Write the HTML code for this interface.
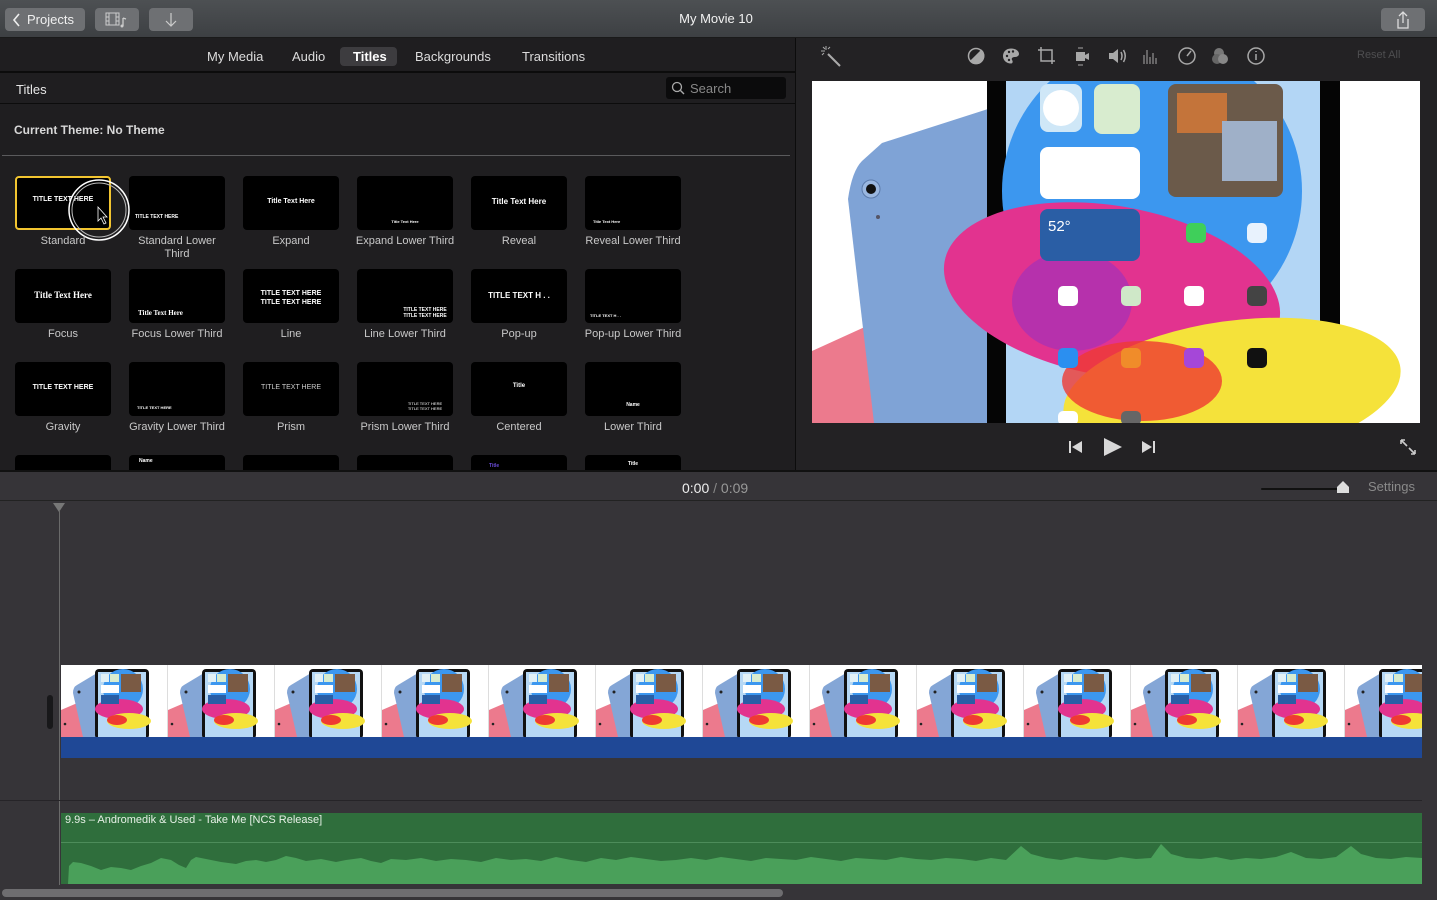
<!DOCTYPE html>
<html><head><meta charset="utf-8">
<style>
*{box-sizing:border-box;margin:0;padding:0}
body{width:1437px;height:900px;overflow:hidden;background:#363438;font-family:"Liberation Sans",sans-serif;position:relative;color:#ddd}
.abs{position:absolute}
.tb{left:0;top:0;width:1437px;height:38px;background:linear-gradient(#4d5053,#3d4043);border-bottom:1px solid #1a1a1a}
.btn{position:absolute;top:8px;height:23px;background:#6e7073;border-radius:4px;color:#f0f0f0;font-size:13px}
.lp{left:0;top:38px;width:795px;height:432px;background:#1f1e20}
.rp{left:796px;top:38px;width:641px;height:432px;background:#232224}
.tab{position:absolute;top:48px;height:18px;font-size:13px;color:#dcdcdc;line-height:18px}
.th{position:absolute;width:96px;height:54px;background:#000;border-radius:4px;color:#fff;font-weight:bold;text-align:center;overflow:hidden}
.lb{position:absolute;width:120px;text-align:center;font-size:11px;color:#c8c8c8;line-height:13px}
.ic{position:absolute;top:46px}
</style></head><body>
<div class="abs tb"></div>
<div class="btn" style="left:5px;width:80px;padding-left:22px;line-height:23px">Projects</div>
<svg class="abs" style="left:12px;top:13px" width="10" height="14"><path d="M7 1 L2 7 L7 13" stroke="#eee" stroke-width="1.6" fill="none"/></svg>
<div class="btn" style="left:95px;width:44px"></div>
<svg class="abs" style="left:105px;top:12px" width="26" height="16"><rect x="1" y="1" width="13" height="12" fill="none" stroke="#ccc"/><path d="M4 1V13M11 1V13M1 5H4M1 9H4M11 5H14M11 9H14" stroke="#ccc"/><path d="M18 6V14M18 6L21 7" stroke="#ccc" stroke-width="1.3"/><circle cx="17" cy="14" r="1.5" fill="#ccc"/></svg>
<div class="btn" style="left:149px;width:44px"></div>
<svg class="abs" style="left:164px;top:12px" width="14" height="16"><path d="M7 1V14M2 9L7 14L12 9" stroke="#ccc" fill="none" stroke-width="1.2"/></svg>
<div class="abs" style="left:0;width:1432px;top:11px;text-align:center;font-size:13px;color:#f2f2f2">My Movie 10</div>
<div class="btn" style="left:1381px;width:44px"></div>
<svg class="abs" style="left:1395px;top:10px" width="16" height="20"><path d="M8 2V13M4 6L8 2L12 6M3 9V18H13V9" stroke="#ddd" fill="none" stroke-width="1.3"/></svg>

<div class="abs lp"></div>
<div class="abs" style="left:0;top:71px;width:795px;height:2px;background:#0c0c0c"></div>
<div class="abs" style="left:340px;top:47px;width:57px;height:19px;background:#3d3c3f;border-radius:4px"></div>
<div class="tab" style="left:207px">My Media</div>
<div class="tab" style="left:292px">Audio</div>
<div class="tab" style="left:353px;color:#fff;font-weight:bold">Titles</div>
<div class="tab" style="left:415px">Backgrounds</div>
<div class="tab" style="left:522px">Transitions</div>
<div class="abs" style="left:16px;top:82px;font-size:13px;color:#e6e6e6">Titles</div>
<div class="abs" style="left:666px;top:77px;width:120px;height:22px;background:#0b0b0c;border-radius:3px"></div>
<svg class="abs" style="left:671px;top:81px" width="14" height="14"><circle cx="6" cy="6" r="4.5" stroke="#aaa" fill="none" stroke-width="1.3"/><path d="M9.5 9.5L13 13" stroke="#aaa" stroke-width="1.4"/></svg>
<div class="abs" style="left:690px;top:81px;font-size:13px;color:#888">Search</div>
<div class="abs" style="left:0;top:103px;width:795px;height:1px;background:#0c0c0c"></div>
<div class="abs" style="left:14px;top:123px;font-size:12px;font-weight:bold;color:#d8d8d8">Current Theme: No Theme</div>
<div class="abs" style="left:2px;top:155px;width:788px;height:1px;background:#5a5a5c"></div>

<!-- row 1 -->
<div class="th" style="left:15px;top:176px;border:2px solid #f2c530;font-size:7px;padding-top:18px">TITLE TEXT HERE</div>
<div class="th" style="left:129px;top:176px;font-size:5px;text-align:left;padding:38px 0 0 6px">TITLE TEXT HERE</div>
<div class="th" style="left:243px;top:176px;font-size:7px;padding-top:22px">Title Text Here</div>
<div class="th" style="left:357px;top:176px;font-size:4px;padding-top:43px">Title Text Here</div>
<div class="th" style="left:471px;top:176px;font-size:8px;padding-top:21px">Title Text Here</div>
<div class="th" style="left:585px;top:176px;font-size:4px;text-align:left;padding:43px 0 0 8px">Title Text Here</div>
<svg class="abs" style="left:66px;top:178px" width="66" height="66"><circle cx="33" cy="32" r="30" fill="none" stroke="#fff" stroke-width="1.5"/><circle cx="33" cy="32" r="27" fill="none" stroke="#bbb" stroke-width="1"/><path d="M32 29V43L35 40L38 46L40 45L37 39H41Z" fill="#000" stroke="#fff" stroke-width="0.8"/></svg>
<div class="lb" style="left:3px;top:235px">Standard</div>
<div class="lb" style="left:117px;top:235px">Standard Lower<br>Third</div>
<div class="lb" style="left:231px;top:235px">Expand</div>
<div class="lb" style="left:345px;top:235px">Expand Lower Third</div>
<div class="lb" style="left:459px;top:235px">Reveal</div>
<div class="lb" style="left:573px;top:235px">Reveal Lower Third</div>
<!-- row 2 -->
<div class="th" style="left:15px;top:269px;font-family:'Liberation Serif',serif;font-size:9px;padding-top:21px">Title Text Here</div>
<div class="th" style="left:129px;top:269px;font-family:'Liberation Serif',serif;font-size:7px;text-align:left;padding:40px 0 0 9px">Title Text Here</div>
<div class="th" style="left:243px;top:269px;font-size:7px;padding-top:20px;line-height:9px">TITLE TEXT HERE<br>TITLE TEXT HERE</div>
<div class="th" style="left:357px;top:269px;font-size:5px;padding:38px 0 0 40px;line-height:6px">TITLE TEXT HERE<br>TITLE TEXT HERE</div>
<div class="th" style="left:471px;top:269px;font-size:8px;padding-top:22px">TITLE TEXT H . .</div>
<div class="th" style="left:585px;top:269px;font-size:4px;text-align:left;padding:44px 0 0 5px">TITLE TEXT H . .</div>
<div class="lb" style="left:3px;top:328px">Focus</div>
<div class="lb" style="left:117px;top:328px">Focus Lower Third</div>
<div class="lb" style="left:231px;top:328px">Line</div>
<div class="lb" style="left:345px;top:328px">Line Lower Third</div>
<div class="lb" style="left:459px;top:328px">Pop-up</div>
<div class="lb" style="left:573px;top:328px">Pop-up Lower Third</div>
<!-- row 3 -->
<div class="th" style="left:15px;top:362px;font-size:7px;padding-top:22px">TITLE TEXT HERE</div>
<div class="th" style="left:129px;top:362px;font-size:4px;text-align:left;padding:43px 0 0 8px">TITLE TEXT HERE</div>
<div class="th" style="left:243px;top:362px;font-size:7px;padding-top:22px;font-weight:normal;color:#ccc">TITLE TEXT HERE</div>
<div class="th" style="left:357px;top:362px;font-size:4px;padding:39px 0 0 40px;font-weight:normal">TITLE TEXT HERE<br>TITLE TEXT HERE</div>
<div class="th" style="left:471px;top:362px;font-size:6px;padding-top:21px">Title</div>
<div class="th" style="left:585px;top:362px;font-size:5px;padding-top:40px">Name</div>
<div class="lb" style="left:3px;top:421px">Gravity</div>
<div class="lb" style="left:117px;top:421px">Gravity Lower Third</div>
<div class="lb" style="left:231px;top:421px">Prism</div>
<div class="lb" style="left:345px;top:421px">Prism Lower Third</div>
<div class="lb" style="left:459px;top:421px">Centered</div>
<div class="lb" style="left:573px;top:421px">Lower Third</div>
<!-- row 4 partial -->
<div class="th" style="left:15px;top:455px;height:15px;border-radius:4px 4px 0 0"></div>
<div class="th" style="left:129px;top:455px;height:15px;font-size:5px;text-align:left;padding:3px 0 0 10px;border-radius:4px 4px 0 0">Name</div>
<div class="th" style="left:243px;top:455px;height:15px;border-radius:4px 4px 0 0"></div>
<div class="th" style="left:357px;top:455px;height:15px;border-radius:4px 4px 0 0"></div>
<div class="th" style="left:471px;top:455px;height:15px;font-size:5px;color:#6a4bd8;padding-top:8px;text-align:left;padding-left:18px;border-radius:4px 4px 0 0">Title</div>
<div class="th" style="left:585px;top:455px;height:15px;font-size:5px;padding-top:6px;border-radius:4px 4px 0 0">Title</div>

<div class="abs" style="left:795px;top:38px;width:1px;height:432px;background:#0c0c0c"></div>
<div class="abs rp"></div>
<!-- viewer toolbar icons -->
<svg class="abs" style="left:818px;top:44px" width="26" height="24"><path d="M10 10L22 22" stroke="#aaa" stroke-width="2"/><path d="M8 2V6M3 7H7M5 3L7 5M12 3L10 5M4 11L6 9" stroke="#aaa" stroke-width="1"/></svg>
<svg class="abs" style="left:965px;top:44px" width="310" height="24" fill="none" stroke="#a8a8a8" stroke-width="1.5">
<circle cx="11" cy="12" r="7.5"/><path d="M16.5 6.5A7.5 7.5 0 0 1 5.7 17.3Z" fill="#a8a8a8"/>
<path d="M46 4.5C40 4.5 38 9 38 12C38 16 41 19.5 46 19.5C48 19.5 48 17 47 16C46 14 48 13 50 13C53 13 54 11 54 10C54 7 51 4.5 46 4.5Z" fill="#a8a8a8" stroke="none"/><circle cx="42" cy="12" r="1.2" fill="#232224" stroke="none"/><circle cx="44" cy="8" r="1.2" fill="#232224" stroke="none"/><circle cx="48" cy="7.5" r="1.2" fill="#232224" stroke="none"/><circle cx="44" cy="16" r="1.2" fill="#232224" stroke="none"/>
<path d="M76 3V17H90M73 6H87V20"/>
<rect x="111" y="8" width="9" height="9" fill="#a8a8a8" stroke="none"/><path d="M120 11L124 9V16L120 14Z" fill="#a8a8a8" stroke="none"/><path d="M113 4H118M113 21H118" stroke-width="1"/>
<path d="M144 9H148L153 5V19L148 15H144Z" fill="#a8a8a8" stroke="none"/><path d="M156 8Q158 12 156 16M158.5 6Q162 12 158.5 18"/>
<path d="M179 20V11M182 20V6M185 20V13M188 20V9M191 20V14" stroke-width="1"/>
<circle cx="222" cy="12" r="8"/><path d="M222 12L226 7"/>
<circle cx="254" cy="9" r="5" fill="#777" stroke="none"/><circle cx="252" cy="15" r="5" fill="#666" stroke="none"/><circle cx="258" cy="15" r="5" fill="#888" stroke="none"/>
<circle cx="291" cy="12" r="8"/><path d="M291 10V16M291 7V8"/>
</svg>
<div class="abs" style="left:1357px;top:49px;font-size:11px;color:#4e4e50">Reset All</div>

<!-- video -->
<svg class="abs" style="left:812px;top:81px" width="608" height="342">
<rect width="608" height="342" fill="#fff"/>
<path d="M0 270L176 190V342H0Z" fill="#ec7a8d"/>
<path d="M50 80Q40 90 36 118L62 342H176V28L70 62Z" fill="#7fa3d6"/>
<circle cx="59" cy="108" r="9" fill="#9ab7e0" stroke="#5b7aaa"/><circle cx="59" cy="108" r="5" fill="#111"/><circle cx="66" cy="136" r="2" fill="#556"/>
<rect x="175" y="0" width="353" height="342" fill="#050505"/>
<rect x="194" y="0" width="314" height="342" fill="#b3d6f5"/>
<circle cx="340" cy="110" r="150" fill="#3c97ef"/>
<ellipse cx="300" cy="210" rx="170" ry="85" fill="#e2338f" transform="rotate(10 300 210)"/>
<ellipse cx="260" cy="220" rx="60" ry="50" fill="#9a31c0" opacity=".6"/>
<ellipse cx="420" cy="310" rx="170" ry="70" fill="#f5e23a" transform="rotate(-8 420 310)"/>
<ellipse cx="330" cy="300" rx="80" ry="40" fill="#ef3a32" opacity=".8"/>
<rect x="228" y="3" width="42" height="48" rx="8" fill="#cfe7f7"/><circle cx="249" cy="27" r="18" fill="#fff"/>
<rect x="282" y="3" width="46" height="50" rx="8" fill="#d8eccf"/>
<rect x="356" y="3" width="115" height="113" rx="8" fill="#6b5a4a"/><rect x="365" y="12" width="50" height="40" fill="#c4743a"/><rect x="410" y="40" width="55" height="60" fill="#9fb0c8"/>
<rect x="228" y="66" width="100" height="52" rx="8" fill="#fff"/>
<rect x="228" y="128" width="100" height="52" rx="8" fill="#2a5ea5"/>
<text x="236" y="150" font-size="15" fill="#fff" font-family="Liberation Sans">52°</text>
<rect x="374" y="142" width="20" height="20" rx="5" fill="#3fcf5a"/><rect x="435" y="142" width="20" height="20" rx="5" fill="#e8f2fd"/>
<rect x="246" y="205" width="20" height="20" rx="5" fill="#fff"/><rect x="309" y="205" width="20" height="20" rx="5" fill="#cfe8c8"/><rect x="372" y="205" width="20" height="20" rx="5" fill="#fff"/><rect x="435" y="205" width="20" height="20" rx="5" fill="#444"/>
<rect x="246" y="267" width="20" height="20" rx="5" fill="#2b8ff0"/><rect x="309" y="267" width="20" height="20" rx="5" fill="#f08c2a"/><rect x="372" y="267" width="20" height="20" rx="5" fill="#a547d8"/><rect x="435" y="267" width="20" height="20" rx="5" fill="#111"/>
<rect x="246" y="330" width="20" height="14" rx="5" fill="#fff"/><rect x="309" y="330" width="20" height="14" rx="5" fill="#666"/>
</svg>
<svg class="abs" style="left:1068px;top:436px" width="95" height="22" fill="#d8d8d8"><rect x="1" y="5" width="2" height="12"/><path d="M14 5V17L4 11Z"/><path d="M36 2V20L54 11Z"/><path d="M74 5V17L84 11Z"/><rect x="85" y="5" width="2" height="12"/></svg>
<svg class="abs" style="left:1398px;top:437px" width="20" height="20" stroke="#ccc" stroke-width="1.6" fill="none"><path d="M3 3L9 9M3 3H7M3 3V7M17 17L11 11M17 17H13M17 17V13"/></svg>

<!-- timeline -->
<div class="abs" style="left:0;top:470px;width:1437px;height:2px;background:#111"></div>
<div class="abs" style="left:0;top:472px;width:1437px;height:29px;background:#363438;border-bottom:1px solid #222"></div>
<div class="abs" style="left:682px;top:480px;font-size:14px;color:#eee">0:00 <span style="color:#888">/</span> <span style="color:#999">0:09</span></div>
<div class="abs" style="left:1261px;top:488px;width:80px;height:2px;background:#111;border-radius:1px"></div>
<svg class="abs" style="left:1336px;top:480px" width="15" height="14"><path d="M1 13V7L7 1L13 7V13Z" fill="#ddd"/></svg>
<div class="abs" style="left:1368px;top:479px;font-size:13px;color:#8a8a8a">Settings</div>
<svg class="abs" style="left:53px;top:503px" width="13" height="10"><path d="M0 0H12L6 9Z" fill="#777"/></svg>
<div class="abs" style="left:59px;top:510px;width:1px;height:375px;background:#6a6a6a"></div>
<div class="abs" style="left:47px;top:695px;width:6px;height:34px;background:#18181a;border-radius:3px"></div>

<svg class="abs" style="left:61px;top:665px" width="1361" height="94">
<defs><pattern id="fr" x="0" y="0" width="107" height="72" patternUnits="userSpaceOnUse">
<rect width="107" height="72" fill="#fff"/><rect x="106" width="1" height="72" fill="#ddd"/>
<path d="M0 45L35 30V72H0Z" fill="#ec7a8d"/>
<path d="M16 20Q12 22 12 28L22 72H36V8Z" fill="#84a6d6"/><circle cx="18" cy="27" r="1.5" fill="#222"/><circle cx="4" cy="59" r="1.3" fill="#222"/>
<rect x="34" y="4" width="54" height="70" rx="4" fill="#111"/>
<rect x="37" y="7" width="48" height="66" fill="#b6d8f5"/>
<circle cx="62" cy="24" r="20" fill="#3c97ef"/>
<ellipse cx="58" cy="44" rx="24" ry="10" fill="#e2338f"/>
<ellipse cx="68" cy="56" rx="22" ry="8" fill="#f5e23a"/>
<ellipse cx="56" cy="55" rx="10" ry="5" fill="#ef3a32"/>
<rect x="40" y="9" width="8" height="8" fill="#e3f1f5"/><rect x="49" y="9" width="9" height="8" fill="#d8eccf"/><rect x="60" y="9" width="20" height="18" fill="#7a5a44"/>
<rect x="40" y="20" width="18" height="8" fill="#fff"/><rect x="40" y="30" width="18" height="9" fill="#2a5ea5"/>
</pattern></defs>
<rect width="1361" height="72" fill="url(#fr)"/>
<rect y="72" width="1361" height="21" fill="#1f4896"/>
</svg>

<div class="abs" style="left:0;top:800px;width:1422px;height:1px;background:#262428"></div>
<div class="abs" style="left:61px;top:813px;width:1361px;height:71px;background:#2f6e3c"></div>
<div class="abs" style="left:61px;top:842px;width:1361px;height:1px;background:#4d8c5a"></div>
<div class="abs" style="left:65px;top:814px;font-size:11px;color:#e6f0e6">9.9s – Andromedik &amp; Used - Take Me [NCS Release]</div>
<svg class="abs" style="left:61px;top:840px" width="1361" height="44">
<path d="M7 44L8 26L12 22L20 23L30 26L40 30L50 27L60 28L70 30L80 26L90 23L100 18L110 20L118 25L125 28L130 20L135 17L145 19L160 22L175 24L185 21L195 20L205 22L215 20L225 16L235 18L245 21L260 19L275 22L285 20L300 18L310 21L320 23L330 19L345 20L360 18L375 21L390 19L405 20L420 22L435 18L450 20L465 19L480 21L495 17L510 20L525 22L540 18L555 20L570 17L585 19L600 21L615 20L630 18L645 20L660 17L675 19L690 21L705 18L720 19L735 20L750 17L765 19L780 21L795 18L810 19L825 20L840 17L855 19L870 20L885 18L900 19L915 21L930 18L945 20L960 6L970 14L985 18L1000 20L1015 17L1030 19L1045 20L1060 17L1075 19L1090 18L1100 4L1110 14L1125 18L1140 19L1155 17L1170 20L1185 18L1200 19L1215 17L1230 12L1245 18L1260 19L1275 17L1290 6L1300 14L1315 18L1330 19L1345 17L1361 18V44Z" fill="#4aa05a"/>
</svg>
<div class="abs" style="left:0;top:885px;width:1437px;height:15px;background:#363438"></div>
<div class="abs" style="left:2px;top:889px;width:781px;height:8px;background:#6e6d70;border-radius:4px"></div>
</body></html>
